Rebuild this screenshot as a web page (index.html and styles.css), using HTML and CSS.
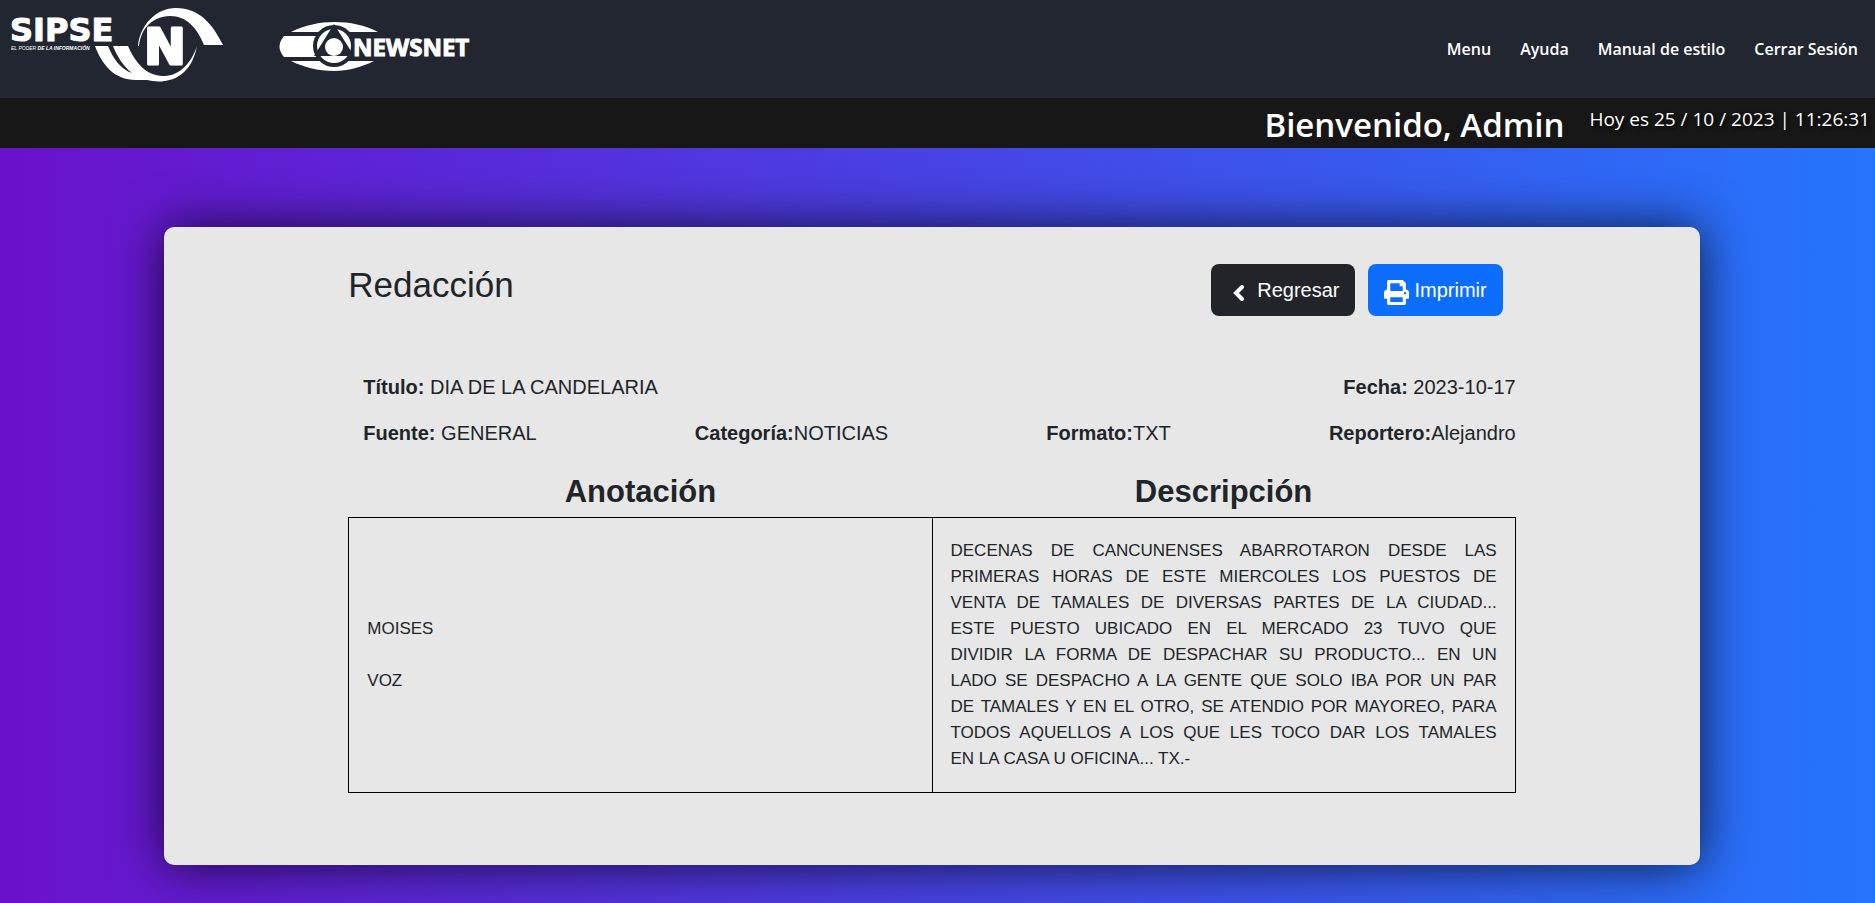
FILE: index.html
```html
<!DOCTYPE html>
<html lang="es">
<head>
<meta charset="utf-8">
<title>Redacción</title>
<link rel="stylesheet" href="styles.css">
</head>
<body>
<header class="site-header">
  <div class="brands">
    <svg class="brand" width="240" height="98" viewBox="0 0 240 98" role="img" aria-label="SIPSE N">
      <text class="sipse" x="10" y="41">SIPSE</text>
      <text class="tagline" x="11" y="50">EL PODER <tspan class="tagline-strong">DE LA INFORMACIÓN</tspan></text>
      <path d="M138 46C140 25 156 8 176 8C200 8 213 25 223 45H204C197 28 187 16 170 16C152 17 141 28 139 46Z"/>
      <path d="M95 46C102 65 115 81 138 80Q143 80 147 80C163 84 190 82 197 46C190 66 178 76 163 76C146 76 135 62 128 46H113C117 56 123 66 132 73C120 69 113 58 108 46Z"/>
      <text class="big-n" x="144" y="64">N</text>
    </svg>
    <svg class="brand" width="240" height="98" viewBox="260 0 240 98" role="img" aria-label="Newsnet">
      <path d="M291 32C305 25 320 22 334 22C350 22 365 25 378 32ZM291 61H374C362 67 348 71 334 71C318 71 303 67 291 61ZM284 36H316V57H284C278 50 278 43 284 36Z"/>
      <circle class="cut" cx="334" cy="46" r="21"/>
      <circle cx="334" cy="46" r="17"/>
      <path class="cut" d="M334 24L314 56H354Z"/>
      <circle cx="334" cy="47" r="9"/>
      <text class="newsnet" x="353" y="56">NEWSNET</text>
    </svg>
  </div>
  <nav class="main-nav">
    <a href="#">Menu</a>
    <a href="#">Ayuda</a>
    <a href="#">Manual de estilo</a>
    <a href="#">Cerrar Sesión</a>
  </nav>
</header>
<div class="welcome-bar">
  <h1 class="welcome">Bienvenido, Admin</h1>
  <p class="clock">Hoy es 25 / 10 / 2023 | 11:26:31</p>
</div>
<main class="page">
  <section class="card">
    <div class="card-head">
      <h2 class="card-title">Redacción</h2>
      <div class="actions">
        <button class="btn btn-dark" type="button">
          <svg class="chevron" width="25" height="25" viewBox="0 0 25 25"><path d="M15 7L9 13L15 19"/></svg>
          Regresar
        </button>
        <button class="btn btn-primary" type="button">
          <svg class="print" width="25" height="25" viewBox="0 0 512 512"><path d="M448 192V77.25c0-8.49-3.37-16.62-9.37-22.63L393.37 9.37c-6-6-14.14-9.37-22.63-9.37H96C78.33 0 64 14.33 64 32v160c-35.35 0-64 28.65-64 64v112c0 8.84 7.16 16 16 16h48v96c0 17.67 14.33 32 32 32h320c17.67 0 32-14.33 32-32v-96h48c8.84 0 16-7.16 16-16V256c0-35.35-28.65-64-64-64zm-64 256H128v-96h256v96zm0-224H128V64h192v48c0 8.84 7.16 16 16 16h48v96zm48 72c-13.25 0-24-10.75-24-24 0-13.26 10.75-24 24-24s24 10.74 24 24c0 13.25-10.75 24-24 24z"/></svg>
          Imprimir
        </button>
      </div>
    </div>
    <div class="meta">
      <div class="meta-row">
        <span><b>Título:</b> DIA DE LA CANDELARIA</span>
        <span><b>Fecha:</b> 2023-10-17</span>
      </div>
      <div class="meta-row">
        <span><b>Fuente:</b> GENERAL</span>
        <span><b>Categoría:</b>NOTICIAS</span>
        <span><b>Formato:</b>TXT</span>
        <span><b>Reportero:</b>Alejandro</span>
      </div>
    </div>
    <table class="script">
      <thead>
        <tr><th>Anotación</th><th>Descripción</th></tr>
      </thead>
      <tbody>
        <tr>
          <td>MOISES<br><br>VOZ</td>
          <td class="copy">DECENAS DE CANCUNENSES ABARROTARON DESDE LAS<br>
            PRIMERAS HORAS DE ESTE MIERCOLES LOS PUESTOS DE<br>
            VENTA DE TAMALES DE DIVERSAS PARTES DE LA CIUDAD...<br>
            ESTE PUESTO UBICADO EN EL MERCADO 23 TUVO QUE<br>
            DIVIDIR LA FORMA DE DESPACHAR SU PRODUCTO... EN UN<br>
            LADO SE DESPACHO A LA GENTE QUE SOLO IBA POR UN PAR<br>
            DE TAMALES Y EN EL OTRO, SE ATENDIO POR MAYOREO, PARA<br>
            TODOS AQUELLOS A LOS QUE LES TOCO DAR LOS TAMALES
            <span class="copy-end">EN LA CASA U OFICINA... TX.-</span></td>
        </tr>
      </tbody>
    </table>
  </section>
</main>
</body>
</html>
```
FILE: styles.css
```css
* {
  box-sizing: border-box;
}

body {
  margin: 0;
  min-height: 100vh;
  background: linear-gradient(to right, #6a11cb, #2575fc);
  color: #212529;
  font-family: "Liberation Sans", Arial, sans-serif;
}

.site-header {
  display: flex;
  align-items: center;
  justify-content: space-between;
  padding-right: 17px;
  background: #222630;
  color: #fff;
  font-family: "Open Sans", "Noto Sans", sans-serif;
}

.brands {
  display: flex;
  gap: 20px;
}

.brand {
  display: block;
  fill: #fff;
}

.cut {
  fill: #222630;
}

.sipse {
  font: bold 32px "DejaVu Sans", sans-serif;
  stroke: #fff;
  stroke-width: 1px;
}

.tagline {
  font: italic 5px "Liberation Sans", sans-serif;
}

.tagline-strong {
  font-weight: 700;
}

.big-n {
  font: bold 50px "DejaVu Sans", sans-serif;
  stroke: #fff;
  stroke-width: 3px;
  stroke-linejoin: round;
}

.newsnet {
  font: bold 24px "Open Sans", sans-serif;
  stroke: #fff;
  stroke-width: 1px;
}

.main-nav {
  display: flex;
  gap: 29px;
}

.main-nav a {
  color: #fff;
  font-size: 16px;
  font-weight: 600;
  line-height: 24px;
  text-decoration: none;
}

.welcome-bar {
  display: flex;
  justify-content: flex-end;
  gap: 25px;
  padding: 7px 5px 3px;
  background: #171717;
  color: #fff;
  font-family: "Open Sans", "Noto Sans", sans-serif;
}

.welcome {
  margin: 0;
  font-size: 33px;
  font-weight: 600;
  line-height: 40px;
}

.clock {
  margin: 0;
  font-size: 19px;
  line-height: 28px;
  text-shadow: 2px 2px 4px #000;
}

.page {
  padding: 79px 175px 35px 164px;
}

.card {
  padding: 37px 12% 72px;
  border-radius: 10px;
  background: #e7e7e7;
  box-shadow: 0 0 50px rgba(0, 0, 0, 0.75);
}

.card-head {
  display: flex;
  align-items: flex-start;
  justify-content: space-between;
  padding-right: 13px;
}

.card-title {
  margin: 0;
  font-size: 35px;
  font-weight: 400;
  line-height: 42px;
}

.actions {
  display: flex;
  gap: 13px;
}

.btn {
  display: flex;
  align-items: center;
  padding: 8px 16px;
  border: 0;
  border-radius: 8px;
  color: #fff;
  font: 20px/36px "Liberation Sans", Arial, sans-serif;
}

.btn svg {
  margin-top: 4px;
}

.btn-dark {
  background: #212529;
}

.btn-primary {
  gap: 5px;
  background: #0d6efd;
}

.chevron {
  margin-right: 5px;
  fill: none;
  stroke: #fff;
  stroke-width: 4;
  stroke-linecap: round;
}

.print {
  fill: #fff;
}

.meta {
  display: grid;
  gap: 16px;
  padding: 56px 0 20px 15px;
  font-size: 20px;
  line-height: 30px;
}

.meta-row {
  display: flex;
  justify-content: space-between;
}

.script {
  width: 100%;
  table-layout: fixed;
  border-collapse: collapse;
}

.script th {
  padding: 5px 0 6px;
  font-size: 31px;
  line-height: 38px;
}

.script td {
  padding: 20px 18px;
  border: 1px solid #000;
  font-size: 17px;
  line-height: 26px;
}

.script .copy {
  text-align: justify;
  text-align-last: justify;
}

.copy-end {
  display: block;
  text-align-last: left;
}
```
